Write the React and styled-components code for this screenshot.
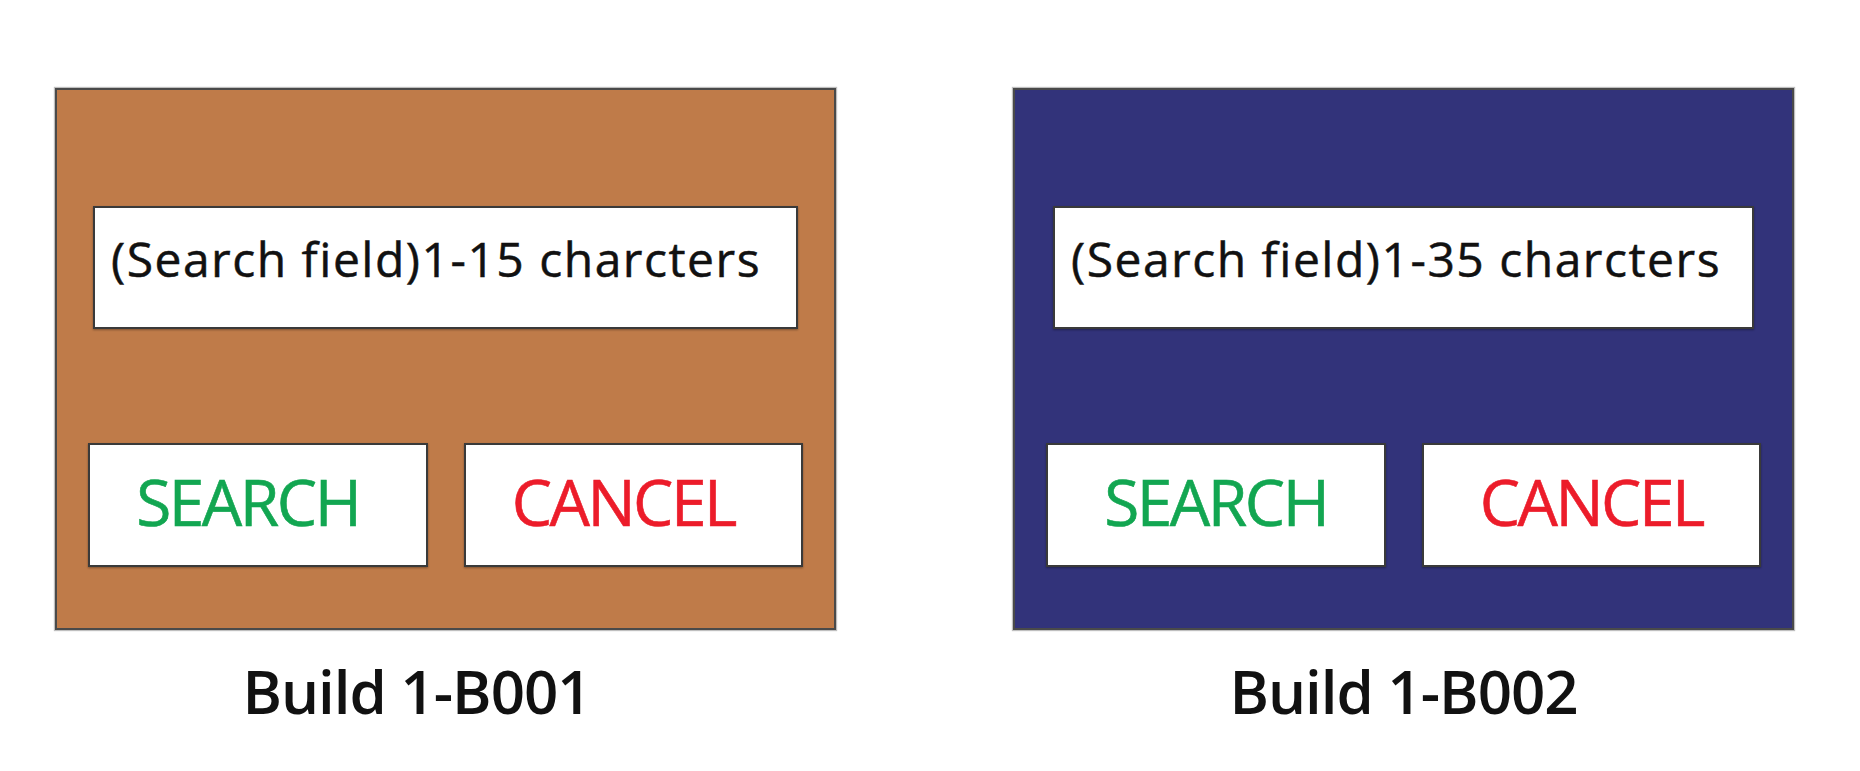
import styled, { createGlobalStyle } from "styled-components";

const GlobalStyle = createGlobalStyle`
  body {
    margin: 0;
    background: #ffffff;
    font-family: 'Open Sans', 'Noto Sans', sans-serif;
  }
`;

const Page = styled.div`
  display: flex;
  gap: 177px;
  padding: 88px 0 0 55px;
`;

const Column = styled.div`
  display: flex;
  flex-direction: column;
  width: 781px;
`;

const Panel = styled.div`
  box-sizing: border-box;
  height: 542px;
  background: ${p => p.$bg};
  border: 2px solid #4a4a4a;
  box-shadow: 0 0 1px 1px rgba(0, 0, 0, 0.25);
  padding: 116px 31px 0 31px;
  display: flex;
  flex-direction: column;
`;

const SearchField = styled.div`
  box-sizing: border-box;
  height: 123px;
  margin: 0 ${p => p.$inset}px;
  background: #ffffff;
  border: 2px solid #3a3a3a;
  box-shadow: 0 1px 2px rgba(0, 0, 0, 0.35);
  padding: 21px 0 0 16px;
  font-size: 48px;
  letter-spacing: 1.5px;
  line-height: 60px;
  color: #111111;
  -webkit-text-stroke: 0.5px #111111;
  white-space: nowrap;
`;

const ButtonRow = styled.div`
  display: grid;
  grid-template-columns: 1fr 1fr;
  gap: 36px;
  margin-top: 114px;
`;

const Button = styled.div`
  box-sizing: border-box;
  height: 124px;
  background: #ffffff;
  border: 2px solid #3a3a3a;
  box-shadow: 0 1px 2px rgba(0, 0, 0, 0.35);
  display: flex;
  align-items: center;
  justify-content: center;
  padding: 0 ${p => p.$nudge}px 8px 0;
  font-size: 64px;
  color: ${p => p.$color};
  -webkit-text-stroke: 0.6px ${p => p.$color};
  letter-spacing: -2.5px;
`;

const Label = styled.div`
  margin-top: 20px;
  text-align: center;
  padding-right: ${p => p.$nudge}px;
  font-size: 60px;
  font-weight: 600;
  color: #111111;
  letter-spacing: -1px;
`;

const builds = [
  { name: "Build 1-B001", bg: "#bf7b49", limit: "1-15", inset: 5, nudge: 20, labelNudge: 58 },
  { name: "Build 1-B002", bg: "#32337a", limit: "1-35", inset: 7, nudge: 0, labelNudge: 0 },
];

const App = () => {
  return (
    <>
      <GlobalStyle />
      <Page>
        {builds.map(b => (
          <Column key={b.name}>
            <Panel $bg={b.bg}>
              <SearchField $inset={b.inset}>(Search field){b.limit} charcters</SearchField>
              <ButtonRow>
                <Button $color="#12a651" $nudge={b.nudge}>SEARCH</Button>
                <Button $color="#ec1c2a" $nudge={b.nudge}>CANCEL</Button>
              </ButtonRow>
            </Panel>
            <Label $nudge={b.labelNudge}>{b.name}</Label>
          </Column>
        ))}
      </Page>
    </>
  );
};

export default App;
